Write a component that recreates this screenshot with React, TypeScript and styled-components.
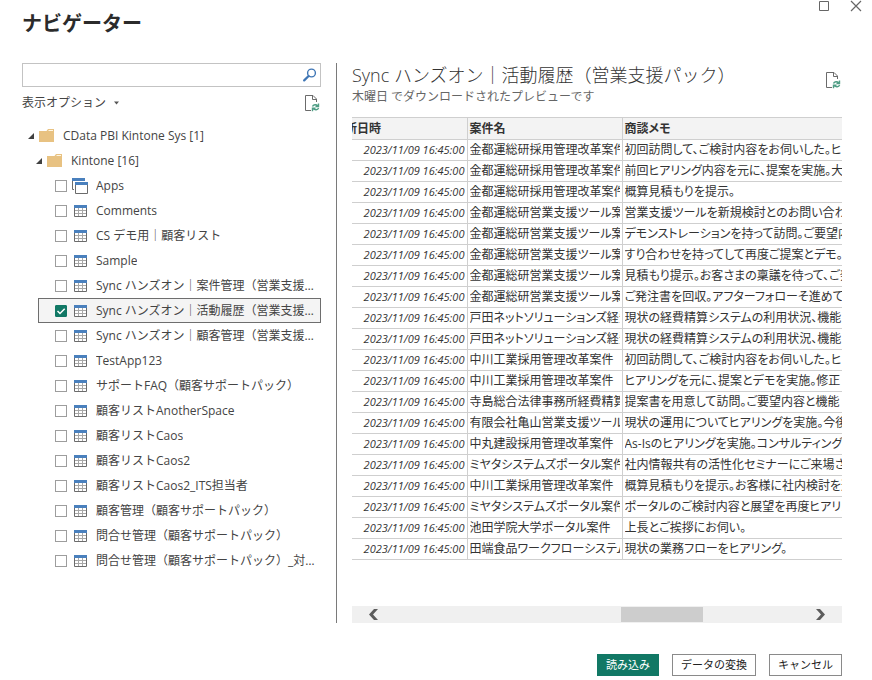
import React, { useLayoutEffect, useRef, useState } from "react";
import styled, { createGlobalStyle, css } from "styled-components";

const GlobalStyle = createGlobalStyle`
  *, *::before, *::after { box-sizing: border-box; }
  body {
    margin: 0;
    background: #ffffff;
    color: #444444;
    font-family: "Open Sans", "Noto Sans CJK JP", sans-serif;
    font-size: 12px;
    line-height: 20px;
  }
  button, input { font: inherit; color: inherit; }
  h1, h2, p, ul { margin: 0; padding: 0; font-weight: normal; }
  ul { list-style: none; }
`;

const Page = styled.div`
  display: flex;
  flex-direction: column;
  min-height: 100vh;
  padding: 0 30px 4px 22px;
`;

const TitleBar = styled.header`
  display: flex;
  justify-content: space-between;
  align-items: flex-start;
  height: 63px;
`;

const PageTitle = styled.h1`
  padding-top: 9px;
  color: #2b2b2b;
  font-size: 20px;
  font-weight: bold;
  line-height: 30px;
`;

const WindowControls = styled.div`
  display: flex;
  gap: 20px;
  margin-right: -20px;
`;

const IconButton = styled.button`
  display: grid;
  place-items: center;
  padding: 0;
  border: 0;
  background: transparent;
  flex: none;
`;

const Panels = styled.main`
  display: grid;
  grid-template-columns: 299px minmax(0, 1fr);
  column-gap: 15px;
  flex: 1;
`;

const Sidebar = styled.section`
  min-width: 0;
`;

const SearchBox = styled.label`
  display: flex;
  align-items: center;
  height: 24px;
  padding-right: 3px;
  border: 1px solid #c3c3c3;
`;

const SearchInput = styled.input`
  flex: 1;
  min-width: 0;
  height: 20px;
  padding: 0 6px;
  border: 0;
  outline: 0;
  background: transparent;
`;

const OptionsRow = styled.div`
  display: flex;
  justify-content: space-between;
  align-items: center;
  height: 32px;
  padding-right: 1px;
`;

const OptionsButton = styled.button`
  display: flex;
  align-items: center;
  gap: 8px;
  padding: 0;
  border: 0;
  background: transparent;
`;

const Tree = styled.ul`
  padding-top: 4px;
`;

const Branch = styled.button<{ $depth: number }>`
  display: flex;
  align-items: center;
  height: 25px;
  padding: 0 0 0 ${(p) => 6 + p.$depth * 8}px;
  border: 0;
  background: transparent;
`;

const BranchName = styled.span`
  padding-left: 8px;
  white-space: nowrap;
`;

const Leaf = styled.label<{ $selected: boolean }>`
  display: flex;
  align-items: center;
  height: 25px;
  margin-left: 16px;
  padding: 0 1px 0 16px;
  border: 1px solid transparent;
  ${(p) =>
    p.$selected &&
    css`
      border-color: #6e6e6e;
      background: #f4f4f4;
    `}
`;

const CheckSlot = styled.span`
  display: grid;
  flex: none;
  margin-right: 5px;
  > * { grid-area: 1 / 1; }
  > svg { pointer-events: none; }
`;

const CheckBox = styled.input`
  appearance: none;
  width: 12px;
  height: 12px;
  margin: 0;
  border: 1px solid #9d9d9d;
  background: #ffffff;
  &:checked {
    border-color: #117865;
    border-radius: 1px;
    background: #117865;
  }
`;

const LeafIcon = styled.span`
  display: grid;
  place-items: center;
  flex: none;
  width: 16px;
  height: 18px;
  margin-right: 8px;
`;

const LeafName = styled.span`
  overflow: hidden;
  text-overflow: ellipsis;
  white-space: nowrap;
`;

const Preview = styled.section`
  display: flex;
  flex-direction: column;
  min-width: 0;
  padding-left: 15px;
  border-left: 1px solid #7a7a7a;
`;

const PreviewHead = styled.div`
  display: flex;
  justify-content: space-between;
  align-items: flex-start;
  height: 54px;
  padding-right: 1px;
`;

const PreviewTitle = styled.h2`
  color: #333333;
  font-size: 18px;
  font-weight: 300;
  line-height: 24px;
  white-space: nowrap;
`;

const PreviewNote = styled.p`
  color: #666666;
  line-height: 20px;
`;

const RefreshSlot = styled.div`
  padding-top: 9px;
`;

const TableView = styled.div`
  flex: 1;
  overflow: hidden;
  margin-bottom: 16px;
`;

const DataTable = styled.table`
  width: 760px;
  border-collapse: collapse;
  table-layout: fixed;
  color: #333333;
  line-height: 18px;
  font-feature-settings: "palt";
`;

const Column = styled.col<{ $width?: number }>`
  width: ${(p) => (p.$width ? `${p.$width}px` : "auto")};
`;

const cell = css`
  padding: 0 2px;
  border-right: 1px solid #cfcfcf;
  border-bottom: 1px solid #cfcfcf;
  white-space: nowrap;
`;

const HeadCell = styled.th`
  ${cell}
  height: 22px;
  border-top: 1px solid #cfcfcf;
  background: #f3f3f3;
  text-align: left;
  font-weight: bold;
`;

const Cell = styled.td`
  ${cell}
  height: 21px;
`;

const DateCell = styled(Cell)`
  text-align: right;
  font-size: 11px;
  font-style: italic;
`;

const CellText = styled.div`
  overflow: hidden;
`;

const ScrollBar = styled.div`
  display: flex;
  height: 17px;
  background: #f0f0f0;
`;

const ScrollButton = styled(IconButton)`
  width: 42px;
  height: 17px;
`;

const ScrollTrack = styled.div`
  flex: 1;
  padding: 1px 0;
`;

const ScrollThumb = styled.div`
  width: 20%;
  height: 15px;
  margin-left: 56%;
  background: #cdcdcd;
`;

const Footer = styled.footer`
  display: flex;
  justify-content: flex-end;
  gap: 13px;
  padding-top: 31px;
`;

const ActionButton = styled.button<{ $primary?: boolean }>`
  height: 22px;
  padding: 0 8px;
  border: 1px solid ${(p) => (p.$primary ? "#117865" : "#8a8a8a")};
  background: ${(p) => (p.$primary ? "#117865" : "#ffffff")};
  color: ${(p) => (p.$primary ? "#ffffff" : "#222222")};
  font-size: 11px;
  line-height: 18px;
`;

const SearchIcon = () => (
  <svg width="14" height="14" viewBox="0 0 14 14" fill="none" stroke="#3f76b5">
    <circle cx="8.5" cy="5" r="3.9" strokeWidth="1.4" />
    <path d="M5.6 8 1.2 12.4" strokeWidth="2.2" strokeLinecap="round" />
  </svg>
);

const RefreshPageIcon = () => (
  <svg width="15" height="17" viewBox="0 0 15 17" fill="none">
    <path d="M6 15.500H.5V.5h7.500l3.500 3.500V7M7.500.5V4.500h4" stroke="#6b6b6b" />
    <path d="M7.500 11.500c.7-2 3.800-2.400 5.300-.6M13.500 8.500v3h-3M13.600 13c-.8 2-3.800 2.400-5.300.6M7.500 16.200v-3h3" stroke="#4f9e85" strokeWidth="1.400" />
  </svg>
);

const DropIcon = () => (
  <svg width="5" height="4" viewBox="0 0 5 4"><path d="M0 .5h5L2.500 3.500z" fill="#555555" /></svg>
);

const ExpandIcon = () => (
  <svg width="6" height="6" viewBox="0 0 6 6"><path d="M6 0v6H0z" fill="#404040" /></svg>
);

const FolderSlot = styled.span`
  display: grid;
  padding: 0 0 0 5px;
`;

const FolderIcon = () => (
  <svg width="16" height="14" viewBox="0 0 16 14">
    <path d="M0 2h7.500L9 0h6v13H0z" fill="#e8c282" />
    <path d="M9.500 1.500H14" stroke="#fff6e2" />
  </svg>
);

const TableIcon = () => (
  <svg width="13" height="12" viewBox="0 0 13 12">
    <path d="M.5.5h12v11H.5z" fill="#ffffff" stroke="#6b6b6b" />
    <path d="M1 5.500h11M1 8.500h11M4.500 3v8M8.500 3v8" stroke="#a8a8a8" />
    <path d="M0 0h13v3H0z" fill="#4a80bd" />
  </svg>
);

const WindowsIcon = () => (
  <svg width="16" height="16" viewBox="0 0 16 16" fill="none">
    <path d="M.5 2v9.500H2M12.500 3v1" stroke="#6b6b6b" />
    <path d="M0 0h13v3H0z" fill="#4a80bd" />
    <path d="M2 3h14v1H2z" fill="#ffffff" />
    <path d="M3.500 5.500h12v10h-12z" fill="#ffffff" stroke="#6b6b6b" />
    <path d="M3 4h13v3H3z" fill="#4a80bd" />
  </svg>
);

const CheckIcon = () => (
  <svg width="12" height="12" viewBox="0 0 12 12" fill="none">
    <path d="m2.500 6 2.500 2.500L9.700 3.700" stroke="#ffffff" strokeWidth="1.500" />
  </svg>
);

const ChevronIcon = ({ right = false }: { right?: boolean }) => (
  <svg width="10" height="11" viewBox="0 0 10 11">
    <path d={right ? "M0 0h4l5 5.500L4 11H0l5-5.500z" : "M10 0H6L1 5.500 6 11h4L5 5.500z"} fill="#5c5c5c" />
  </svg>
);

const items = [
  "Apps",
  "Comments",
  "CS デモ用｜顧客リスト",
  "Sample",
  "Sync ハンズオン｜案件管理（営業支援パック）",
  "Sync ハンズオン｜活動履歴（営業支援パック）",
  "Sync ハンズオン｜顧客管理（営業支援パック）",
  "TestApp123",
  "サポートFAQ（顧客サポートパック）",
  "顧客リストAnotherSpace",
  "顧客リストCaos",
  "顧客リストCaos2",
  "顧客リストCaos2_ITS担当者",
  "顧客管理（顧客サポートパック）",
  "問合せ管理（顧客サポートパック）",
  "問合せ管理（顧客サポートパック）_対応履歴",
];

const updatedAt = "2023/11/09 16:45:00";

const rows: [string, string][] = [
  ["金都運総研採用管理改革案件", "初回訪問して、ご検討内容をお伺いした。ヒア"],
  ["金都運総研採用管理改革案件", "前回ヒアリング内容を元に、提案を実施。大"],
  ["金都運総研採用管理改革案件", "概算見積もりを提示。"],
  ["金都運総研営業支援ツール案件", "営業支援ツールを新規検討とのお問い合わせ"],
  ["金都運総研営業支援ツール案件", "デモンストレーションを持って訪問。ご要望内容"],
  ["金都運総研営業支援ツール案件", "すり合わせを持ってして再度ご提案とデモ。"],
  ["金都運総研営業支援ツール案件", "見積もり提示。お客さまの稟議を待って、ご発注"],
  ["金都運総研営業支援ツール案件", "ご発注書を回収。アフターフォローそ進めて"],
  ["戸田ネットソリューションズ経費精算", "現状の経費精算システムの利用状況、機能"],
  ["戸田ネットソリューションズ経費精算", "現状の経費精算システムの利用状況、機能"],
  ["中川工業採用管理改革案件", "初回訪問して、ご検討内容をお伺いした。ヒア"],
  ["中川工業採用管理改革案件", "ヒアリングを元に、提案とデモを実施。修正"],
  ["寺島総合法律事務所経費精算", "提案書を用意して訪問。ご要望内容と機能"],
  ["有限会社亀山営業支援ツール", "現状の運用についてヒアリングを実施。今後"],
  ["中丸建設採用管理改革案件", "As-Isのヒアリングを実施。コンサルティングを"],
  ["ミヤタシステムズポータル案件", "社内情報共有の活性化セミナーにご来場さ"],
  ["中川工業採用管理改革案件", "概算見積もりを提示。お客様に社内検討を進"],
  ["ミヤタシステムズポータル案件", "ポータルのご検討内容と展望を再度ヒアリング"],
  ["池田学院大学ポータル案件", "上長とご挨拶にお伺い。"],
  ["田端食品ワークフローシステム", "現状の業務フローをヒアリング。"],
];

export default function App() {
  const [selected, setSelected] = useState<number | null>(5);
  const view = useRef<HTMLDivElement>(null);

  useLayoutEffect(() => {
    if (view.current) view.current.scrollLeft = 21;
  }, []);

  const scroll = (step: number) => view.current?.scrollBy({ left: step });

  return (
    <>
      <GlobalStyle />
      <Page>
        <TitleBar>
          <PageTitle>ナビゲーター</PageTitle>
          <WindowControls>
            <IconButton aria-label="最大化">
              <svg width="11" height="12" viewBox="0 0 11 12" fill="none" stroke="#666666"><path d="M.5 1.500h9v9h-9z" /></svg>
            </IconButton>
            <IconButton aria-label="閉じる">
              <svg width="12" height="12" viewBox="0 0 12 12" fill="none" stroke="#666666" strokeWidth="1.200"><path d="m1 1 10 10M11 1 1 11" /></svg>
            </IconButton>
          </WindowControls>
        </TitleBar>
        <Panels>
          <Sidebar>
            <SearchBox>
              <SearchInput type="text" aria-label="検索" />
              <SearchIcon />
            </SearchBox>
            <OptionsRow>
              <OptionsButton>表示オプション<DropIcon /></OptionsButton>
              <IconButton aria-label="更新"><RefreshPageIcon /></IconButton>
            </OptionsRow>
            <Tree>
              <li>
                <Branch $depth={0}>
                  <ExpandIcon />
                  <FolderSlot><FolderIcon /></FolderSlot>
                  <BranchName>CData PBI Kintone Sys [1]</BranchName>
                </Branch>
                <ul>
                  <li>
                    <Branch $depth={1}>
                      <ExpandIcon />
                      <FolderSlot><FolderIcon /></FolderSlot>
                      <BranchName>Kintone [16]</BranchName>
                    </Branch>
                    <ul>
                      {items.map((name, i) => (
                        <li key={name}>
                          <Leaf $selected={selected === i}>
                            <CheckSlot>
                              <CheckBox
                                type="checkbox"
                                checked={selected === i}
                                onChange={() => setSelected(selected === i ? null : i)}
                              />
                              {selected === i && <CheckIcon />}
                            </CheckSlot>
                            <LeafIcon>{i === 0 ? <WindowsIcon /> : <TableIcon />}</LeafIcon>
                            <LeafName>{name}</LeafName>
                          </Leaf>
                        </li>
                      ))}
                    </ul>
                  </li>
                </ul>
              </li>
            </Tree>
          </Sidebar>
          <Preview>
            <PreviewHead>
              <div>
                <PreviewTitle>Sync ハンズオン｜活動履歴（営業支援パック）</PreviewTitle>
                <PreviewNote>木曜日 でダウンロードされたプレビューです</PreviewNote>
              </div>
              <RefreshSlot>
                <IconButton aria-label="プレビューを更新"><RefreshPageIcon /></IconButton>
              </RefreshSlot>
            </PreviewHead>
            <TableView ref={view}>
              <DataTable>
                <colgroup>
                  <Column $width={136} />
                  <Column $width={155} />
                  <Column />
                </colgroup>
                <thead>
                  <tr>
                    <HeadCell>更新日時</HeadCell>
                    <HeadCell>案件名</HeadCell>
                    <HeadCell>商談メモ</HeadCell>
                  </tr>
                </thead>
                <tbody>
                  {rows.map(([name, memo], i) => (
                    <tr key={i}>
                      <DateCell>{updatedAt}</DateCell>
                      <Cell><CellText>{name}</CellText></Cell>
                      <Cell><CellText>{memo}</CellText></Cell>
                    </tr>
                  ))}
                </tbody>
              </DataTable>
            </TableView>
            <ScrollBar>
              <ScrollButton aria-label="左へスクロール" onClick={() => scroll(-40)}><ChevronIcon /></ScrollButton>
              <ScrollTrack><ScrollThumb /></ScrollTrack>
              <ScrollButton aria-label="右へスクロール" onClick={() => scroll(40)}><ChevronIcon right /></ScrollButton>
            </ScrollBar>
          </Preview>
        </Panels>
        <Footer>
          <ActionButton $primary>読み込み</ActionButton>
          <ActionButton>データの変換</ActionButton>
          <ActionButton>キャンセル</ActionButton>
        </Footer>
      </Page>
    </>
  );
}
